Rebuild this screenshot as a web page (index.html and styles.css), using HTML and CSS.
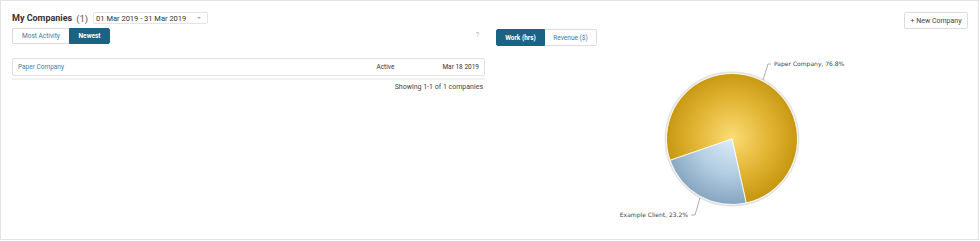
FILE: index.html
```
<!DOCTYPE html>
<html>
<head>
<meta charset="utf-8">
<link rel="stylesheet" href="styles.css">
</head>
<body>
<div class="card">
  <div class="left">
    <div class="title-row">
      <span class="title">My Companies</span>
      <span class="count">(1)</span>
      <div class="date-select">
        <span>01 Mar 2019 - 31 Mar 2019</span>
        <span class="caret"></span>
      </div>
    </div>
    <div class="tabs-row">
      <div class="btn-group">
        <div class="btn btn-most">Most Activity</div>
        <div class="btn btn-active btn-newest">Newest</div>
      </div>
      <span class="help">?</span>
    </div>
    <div class="table">
      <div class="row">
        <a class="name">Paper Company</a>
        <span class="status">Active</span>
        <span class="date">Mar 18 2019</span>
      </div>
    </div>
    <div class="row-shadow"></div>
    <div class="showing">Showing 1-1 of 1 companies</div>
  </div>
  <div class="right">
    <div class="new-row">
      <div class="new-btn">+ New Company</div>
    </div>
    <div class="btn-group">
      <div class="btn btn-active btn-work">Work (hrs)</div>
      <div class="btn btn-rev">Revenue ($)</div>
    </div>
    <svg class="chart" width="472" height="188" viewBox="0 0 472 188">
      <defs>
        <radialGradient id="gold" gradientUnits="userSpaceOnUse" cx="236" cy="88" r="67">
          <stop offset="0" stop-color="#fcdc74"/>
          <stop offset="0.55" stop-color="#e2b535"/>
          <stop offset="1" stop-color="#c6960f"/>
        </radialGradient>
        <radialGradient id="blue" gradientUnits="userSpaceOnUse" cx="236" cy="88" r="67">
          <stop offset="0" stop-color="#dcedfb"/>
          <stop offset="0.55" stop-color="#b3cde2"/>
          <stop offset="1" stop-color="#87a6c0"/>
        </radialGradient>
      </defs>
      <circle cx="236" cy="90" r="66.6" fill="none" stroke="#e2e2e2" stroke-width="1.6"/>
      <path d="M236,90 L174.07,111.32 A65.5,65.5 0 1,1 250.18,153.95 Z" fill="url(#gold)" stroke="#ffffff" stroke-width="0.8"/>
      <path d="M236,90 L250.18,153.95 A65.5,65.5 0 0,1 174.07,111.32 Z" fill="url(#blue)" stroke="#ffffff" stroke-width="0.8"/>
      <polyline points="267,31 272,15 275,15" fill="none" stroke="#999" stroke-width="0.8"/>
      <text class="lbl" x="278" y="17">Paper Company, 76.8%</text>
      <polyline points="204,149 199,166 195,166" fill="none" stroke="#999" stroke-width="0.8"/>
      <text class="lbl" x="192" y="168" text-anchor="end">Example Client, 23.2%</text>
    </svg>
  </div>
</div>
</body>
</html>
```
FILE: styles.css
```
html, body {
  margin: 0;
  padding: 0;
  background: #ffffff;
}
body {
  font-family: Roboto, "Liberation Sans", sans-serif;
  color: #333;
}
.card {
  box-sizing: border-box;
  width: 979px;
  height: 240px;
  border: 1px solid #e3e3e3;
  display: flex;
  padding: 11px 10px 0 11px;
}
.left {
  width: 474px;
  display: flex;
  flex-direction: column;
}
.title-row {
  display: flex;
  align-items: center;
  height: 12px;
}
.title {
  font-size: 9px;
  font-weight: bold;
  color: #333;
}
.count {
  font-size: 9.5px;
  color: #555;
  margin-left: 4px;
}
.date-select {
  box-sizing: border-box;
  margin-left: 5px;
  width: 115px;
  height: 12px;
  border: 1px solid #e4e4e4;
  border-radius: 2px;
  display: flex;
  align-items: center;
  justify-content: space-between;
  padding: 0 6px 0 2px;
  font-size: 7.5px;
  color: #333;
}
.caret {
  width: 0;
  height: 0;
  border-left: 2.5px solid transparent;
  border-right: 2.5px solid transparent;
  border-top: 2.5px solid #aaa;
}
.tabs-row {
  display: flex;
  justify-content: space-between;
  align-items: flex-start;
  margin-top: 4px;
}
.btn-group {
  display: flex;
}
.btn {
  box-sizing: border-box;
  height: 16px;
  display: flex;
  align-items: center;
  justify-content: center;
  font-size: 6.5px;
  color: #3a7aa3;
  border: 1px solid #dcdcdc;
  background: #fff;
}
.btn-active {
  background: #1b6383;
  border-color: #1b6383;
  color: #fff;
  font-weight: bold;
}
.btn-most { width: 57px; border-radius: 2px 0 0 2px; border-right: none; }
.btn-newest { width: 41px; border-radius: 0 2px 2px 0; }
.help {
  font-size: 6.5px;
  color: #aaa;
  margin-right: 6px;
  margin-top: 3px;
}
.table {
  margin-top: 14px;
}
.row {
  box-sizing: border-box;
  height: 18px;
  border: 1px solid #e0e0e0;
  border-radius: 2px;
  display: flex;
  align-items: center;
  padding: 0 5px 0 5px;
  font-size: 6.5px;
  color: #333;
}
.name {
  color: #3a82b0;
  flex: 1;
}
.status {
  width: 66px;
}
.date {
  text-align: right;
}
.row-shadow {
  height: 2px;
  background: #f1f1f1;
  margin-top: 2px;
}
.showing {
  font-size: 7px;
  color: #444;
  text-align: right;
  margin-top: 3px;
  padding-right: 2px;
}
.right {
  margin-left: 11px;
  flex: 1;
  display: flex;
  flex-direction: column;
}
.new-row {
  display: flex;
  justify-content: flex-end;
}
.new-btn {
  box-sizing: border-box;
  width: 64px;
  height: 17px;
  border: 1px solid #dcdcdc;
  border-radius: 2px;
  display: flex;
  align-items: center;
  justify-content: center;
  font-size: 7px;
  color: #444;
}
.right .btn-group {
  margin-top: 0;
}
.right .btn {
  height: 17px;
}
.btn-work { width: 49px; border-radius: 2px 0 0 2px; }
.btn-rev { width: 52px; border-radius: 0 2px 2px 0; border-left: none; }
.chart {
  display: block;
  margin-top: 3px;
}
.lbl {
  font-family: "DejaVu Sans", Verdana, sans-serif;
  font-size: 6px;
  fill: #444;
}
```
